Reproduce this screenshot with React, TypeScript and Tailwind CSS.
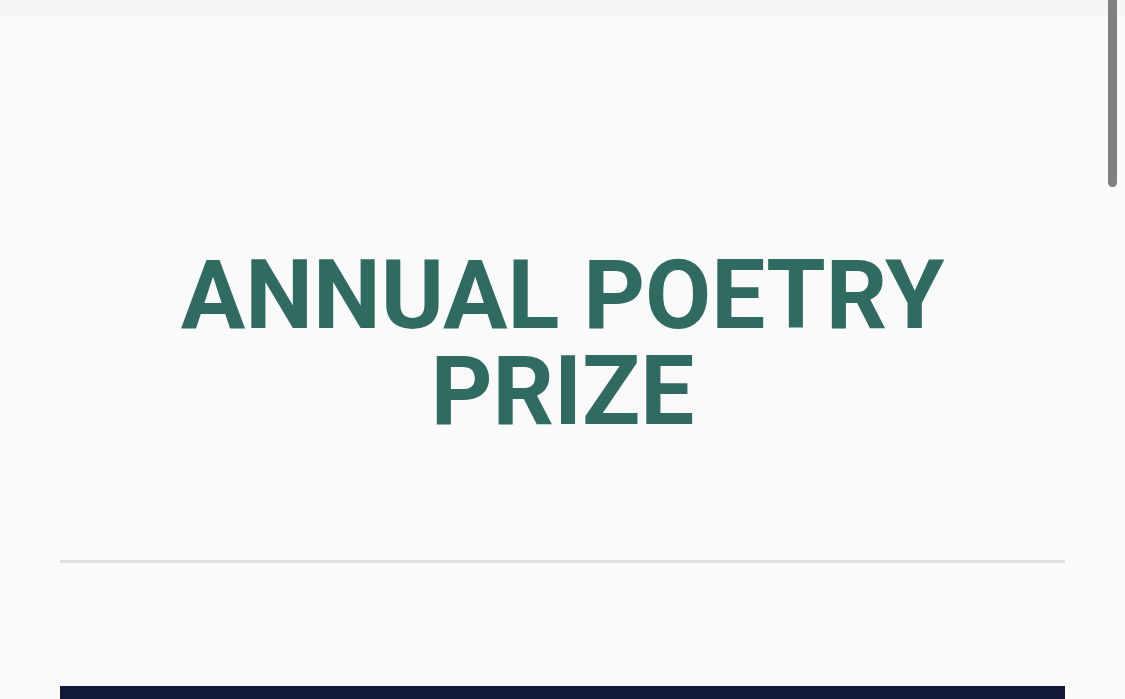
export default function App() {
  return (
    <div className="relative min-h-[699px] h-[699px] overflow-hidden bg-[#fafafa]" style={{ fontFamily: 'Roboto, "Liberation Sans", sans-serif' }}>
      <div className="h-[15px] bg-[#f5f5f5]" />
      <main className="px-[60px]">
        <section className="pt-[232px] pb-[121px]">
          <h1 className="text-center text-[96px] font-bold leading-none text-[#2f6b61]">
            ANNUAL POETRY
            <br />
            PRIZE
          </h1>
        </section>
        <hr className="h-[3px] border-0 bg-[#dedede]" />
        <div className="mt-[123px] h-[60px] bg-[#111936]" />
      </main>
      <div className="absolute right-[8px] top-0 h-[187px] w-[9px] rounded-b-full bg-[#808080]" />
    </div>
  );
}
